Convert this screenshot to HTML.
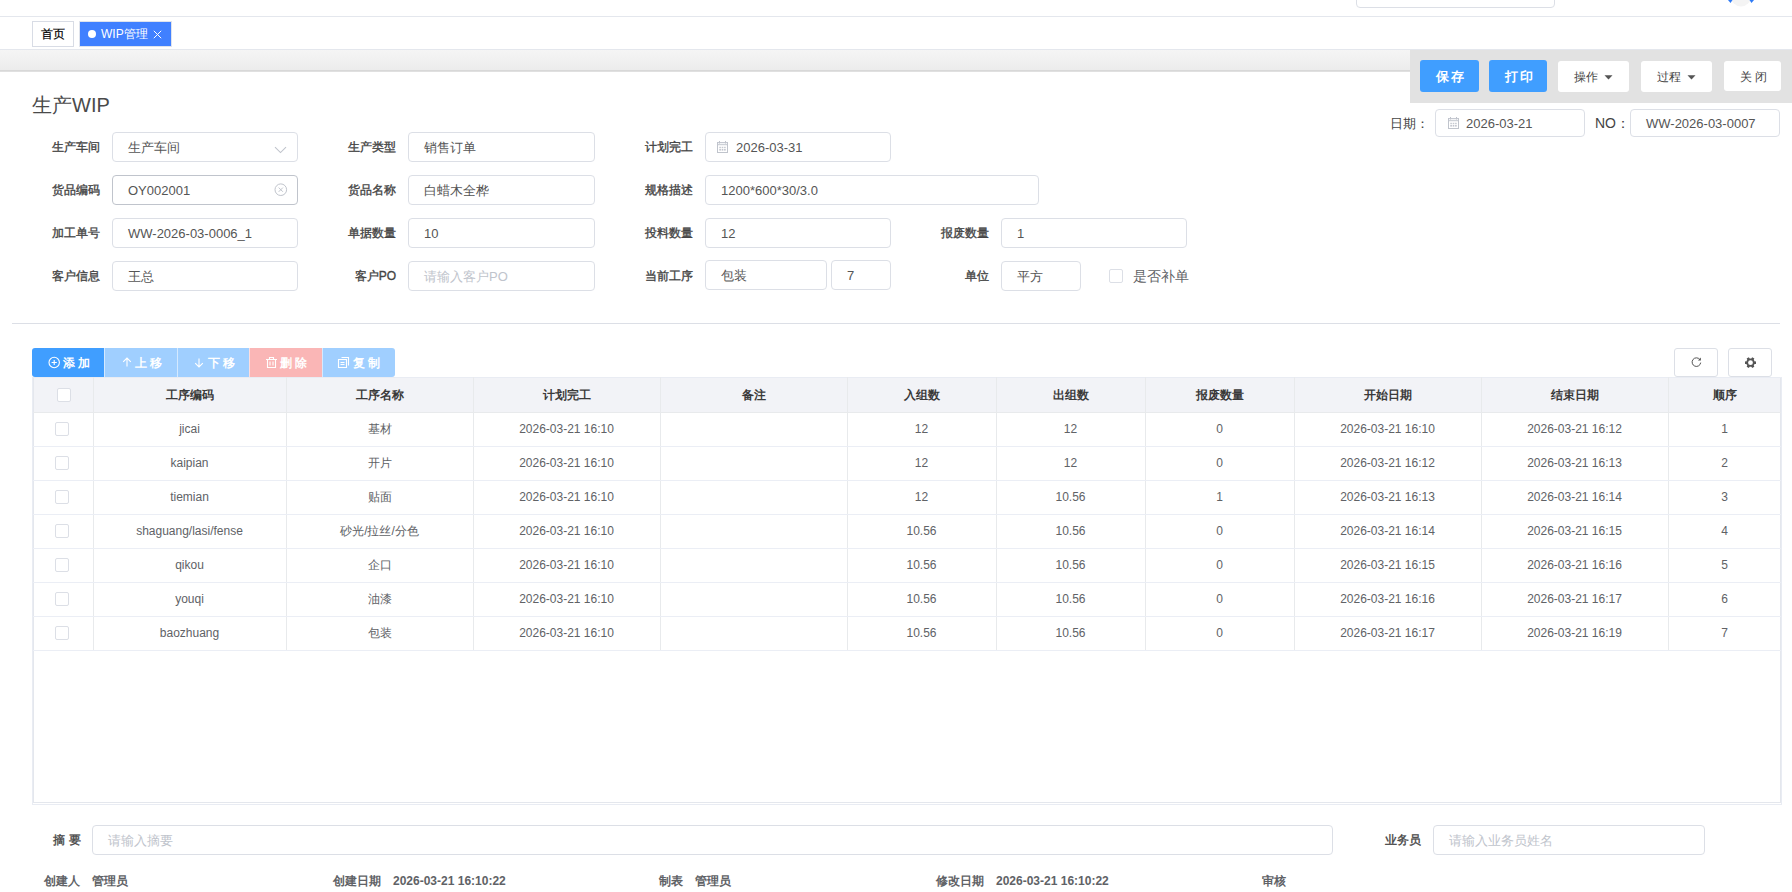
<!DOCTYPE html>
<html><head><meta charset="utf-8">
<style>
*{box-sizing:border-box;margin:0;padding:0}
html,body{width:1792px;height:892px;overflow:hidden;background:#fff;font-family:"Liberation Sans",sans-serif;color:#606266}
.a{position:absolute}
.hl{position:absolute;height:1px;background:#e4e7ed}
.lbl{position:absolute;font-size:12px;font-weight:normal;color:#444;-webkit-text-stroke:0.35px #444;text-align:right;white-space:nowrap;line-height:30px;height:30px}
.inp{position:absolute;height:30px;border:1px solid #dcdfe6;border-radius:4px;background:#fff;font-size:13px;color:#555;line-height:29px;padding-left:15px;white-space:nowrap}
.ph{color:#c0c4cc}
.bt{position:absolute;font-size:13px;font-weight:bold;white-space:nowrap;line-height:16px}
.tt{position:absolute;top:355px;height:16px;color:#fff;font-size:12px;font-weight:bold;line-height:16px;letter-spacing:2.5px;white-space:nowrap}
.cb{position:absolute;width:14px;height:14px;border:1px solid #dcdfe6;border-radius:2px;background:#fff}
.th{position:absolute;top:377px;height:35px;line-height:36px;font-size:12px;font-weight:bold;color:#3a3a3a;text-align:center;white-space:nowrap}
.td{position:absolute;height:34px;line-height:34px;font-size:12px;color:#606266;text-align:center;white-space:nowrap}
.vl{position:absolute;width:1px;background:#e8eaec}
.ft{position:absolute;top:873px;font-size:12px;font-weight:bold;color:#606266;line-height:16px;white-space:nowrap}
</style></head><body>

<!-- header -->
<div class="a" style="left:1356px;top:-23px;width:199px;height:31px;border:1px solid #dcdfe6;border-radius:4px"></div>
<svg class="a" style="left:1726px;top:0" width="30" height="10" viewBox="0 0 30 10"><circle cx="15" cy="-3.5" r="10" fill="#f4f4f4"/><path d="M2 0H6.5L4.5 3Z" fill="#2f7bf5"/><path d="M23.5 0H28L25.5 3Z" fill="#2f7bf5"/></svg>

<div class="hl" style="left:0;top:16px;width:1792px"></div>

<!-- tabs -->
<div class="a" style="left:32px;top:21px;width:42px;height:26px;border:1px solid #d8dce5;background:#fff;font-size:12px;color:#000;line-height:24px;text-align:center;-webkit-text-stroke:0.2px #000">首页</div>
<div class="a" style="left:79px;top:21px;width:93px;height:26px;border:1px solid #dfe3ec;background:#4080ff"></div>
<div class="a" style="left:80px;top:22px;width:91px;height:24px;background:#4080ff;font-size:12px;color:#fff;line-height:24px;white-space:nowrap">
  <span class="a" style="left:8px;top:8px;width:8px;height:8px;border-radius:50%;background:#fff"></span>
  <span class="a" style="left:21px;top:0">WIP管理</span>
  <svg class="a" style="left:73px;top:8px" width="9" height="9" viewBox="0 0 9 9"><path d="M0.8 0.8L8.2 8.2M8.2 0.8L0.8 8.2" stroke="#fff" stroke-width="1"/></svg>
</div>
<div class="hl" style="left:0;top:49px;width:1792px"></div>
<div class="a" style="left:0;top:50px;width:1792px;height:20px;background:linear-gradient(#f5f5f5,#ececec)"></div>
<div class="a" style="left:0;top:70px;width:1792px;height:2px;background:linear-gradient(#d4d4d4,#e4e4e4)"></div>

<!-- toolbar -->
<div class="a" style="left:1410px;top:50px;width:382px;height:53px;background:#e2e2e2"></div>
<div class="a" style="left:1420px;top:60px;width:59px;height:32px;background:#409eff;border-radius:3px"></div>
<div class="bt" style="left:1436px;top:69px;color:#fff;letter-spacing:2px">保存</div>
<div class="a" style="left:1489px;top:60px;width:58px;height:32px;background:#409eff;border-radius:3px"></div>
<div class="bt" style="left:1505px;top:69px;color:#fff;letter-spacing:2px">打印</div>
<div class="a" style="left:1558px;top:61px;width:71px;height:31px;background:#fff;border-radius:3px"></div>
<div class="bt" style="left:1574px;top:69px;color:#444;font-size:12px;font-weight:normal">操作</div>
<svg class="a" style="left:1604px;top:75px" width="9" height="5" viewBox="0 0 9 5"><path d="M0.5 0.2H8.5L4.5 4.6Z" fill="#555"/></svg>
<div class="a" style="left:1641px;top:61px;width:71px;height:31px;background:#fff;border-radius:3px"></div>
<div class="bt" style="left:1657px;top:69px;color:#444;font-size:12px;font-weight:normal">过程</div>
<svg class="a" style="left:1687px;top:75px" width="9" height="5" viewBox="0 0 9 5"><path d="M0.5 0.2H8.5L4.5 4.6Z" fill="#555"/></svg>
<div class="a" style="left:1724px;top:61px;width:57px;height:30px;background:#fff;border-radius:3px"></div>
<div class="bt" style="left:1740px;top:69px;color:#444;font-size:12px;font-weight:normal;letter-spacing:3px">关闭</div>

<!-- title -->
<div class="a" style="left:32px;top:91px;font-size:20px;color:#4a4a4a;line-height:28px;white-space:nowrap">生产WIP</div>

<!-- date / no -->
<div class="a" style="left:1390px;top:109px;font-size:13px;color:#444;line-height:29px">日期：</div>
<div class="inp" style="left:1435px;top:109px;width:150px;height:28px;line-height:27px;padding-left:30px">2026-03-21</div>
<svg class="a" style="left:1447px;top:117px" width="12" height="12" viewBox="0 0 12 12"><g fill="none" stroke="#c0c4cc" stroke-width="1"><rect x="1.5" y="1.5" width="10" height="10"/></g><rect x="1" y="1" width="11" height="3.2" fill="#c0c4cc" opacity=".85"/><rect x="2" y="1.9" width="9" height="1.2" fill="#fff" opacity=".8"/><rect x="3" y="0" width="1" height="2.5" fill="#c0c4cc"/><rect x="9" y="0" width="1" height="2.5" fill="#c0c4cc"/><g fill="#c0c4cc"><rect x="3.3" y="5.8" width="1.6" height="1.1"/><rect x="5.7" y="5.8" width="1.6" height="1.1"/><rect x="8.1" y="5.8" width="1.6" height="1.1"/><rect x="3.3" y="7.8" width="1.6" height="1.8"/><rect x="5.7" y="7.8" width="1.6" height="1.8"/><rect x="8.1" y="7.8" width="1.6" height="1.8"/></g></svg>
<div class="a" style="left:1595px;top:109px;font-size:14px;color:#444;line-height:29px">NO：</div>
<div class="inp" style="left:1630px;top:109px;width:150px;height:28px;line-height:27px;padding-left:15px">WW-2026-03-0007</div>

<!-- form row 1 -->
<div class="lbl" style="left:40px;top:132px;width:60px">生产车间</div>
<div class="inp" style="left:112px;top:132px;width:186px">生产车间</div>
<svg class="a" style="left:274px;top:146px" width="13" height="8" viewBox="0 0 13 8"><path d="M1 1.2L6.5 6.6L12 1.2" fill="none" stroke="#c0c4cc" stroke-width="1.1"/></svg>
<div class="lbl" style="left:336px;top:132px;width:60px">生产类型</div>
<div class="inp" style="left:408px;top:132px;width:187px">销售订单</div>
<div class="lbl" style="left:633px;top:132px;width:60px">计划完工</div>
<div class="inp" style="left:705px;top:132px;width:186px;padding-left:30px">2026-03-31</div>
<svg class="a" style="left:716px;top:141px" width="12" height="12" viewBox="0 0 12 12"><g fill="none" stroke="#c0c4cc" stroke-width="1"><rect x="1.5" y="1.5" width="10" height="10"/></g><rect x="1" y="1" width="11" height="3.2" fill="#c0c4cc" opacity=".85"/><rect x="2" y="1.9" width="9" height="1.2" fill="#fff" opacity=".8"/><rect x="3" y="0" width="1" height="2.5" fill="#c0c4cc"/><rect x="9" y="0" width="1" height="2.5" fill="#c0c4cc"/><g fill="#c0c4cc"><rect x="3.3" y="5.8" width="1.6" height="1.1"/><rect x="5.7" y="5.8" width="1.6" height="1.1"/><rect x="8.1" y="5.8" width="1.6" height="1.1"/><rect x="3.3" y="7.8" width="1.6" height="1.8"/><rect x="5.7" y="7.8" width="1.6" height="1.8"/><rect x="8.1" y="7.8" width="1.6" height="1.8"/></g></svg>

<!-- row 2 -->
<div class="lbl" style="left:40px;top:175px;width:60px">货品编码</div>
<div class="inp" style="left:112px;top:175px;width:186px;border-color:#c0c4cc">OY002001</div>
<svg class="a" style="left:274px;top:183px" width="14" height="14" viewBox="0 0 14 14"><circle cx="6.8" cy="6.7" r="5.8" fill="none" stroke="#c0c4cc" stroke-width="1"/><path d="M4.7 4.6L8.9 8.8M8.9 4.6L4.7 8.8" stroke="#c0c4cc" stroke-width="1"/></svg>
<div class="lbl" style="left:336px;top:175px;width:60px">货品名称</div>
<div class="inp" style="left:408px;top:175px;width:187px">白蜡木全桦</div>
<div class="lbl" style="left:633px;top:175px;width:60px">规格描述</div>
<div class="inp" style="left:705px;top:175px;width:334px">1200*600*30/3.0</div>

<!-- row 3 -->
<div class="lbl" style="left:40px;top:218px;width:60px">加工单号</div>
<div class="inp" style="left:112px;top:218px;width:186px">WW-2026-03-0006_1</div>
<div class="lbl" style="left:336px;top:218px;width:60px">单据数量</div>
<div class="inp" style="left:408px;top:218px;width:187px">10</div>
<div class="lbl" style="left:633px;top:218px;width:60px">投料数量</div>
<div class="inp" style="left:705px;top:218px;width:186px">12</div>
<div class="lbl" style="left:929px;top:218px;width:60px">报废数量</div>
<div class="inp" style="left:1001px;top:218px;width:186px">1</div>

<!-- row 4 -->
<div class="lbl" style="left:40px;top:261px;width:60px">客户信息</div>
<div class="inp" style="left:112px;top:261px;width:186px">王总</div>
<div class="lbl" style="left:336px;top:261px;width:60px">客户PO</div>
<div class="inp ph" style="left:408px;top:261px;width:187px">请输入客户PO</div>
<div class="lbl" style="left:633px;top:261px;width:60px">当前工序</div>
<div class="inp" style="left:705px;top:260px;width:122px">包装</div>
<div class="inp" style="left:831px;top:260px;width:60px">7</div>
<div class="lbl" style="left:929px;top:261px;width:60px">单位</div>
<div class="inp" style="left:1001px;top:261px;width:80px">平方</div>
<div class="cb" style="left:1109px;top:269px"></div>
<div class="a" style="left:1133px;top:261px;font-size:14px;color:#606266;line-height:30px;white-space:nowrap">是否补单</div>

<div class="a" style="left:12px;top:323px;width:1768px;height:1px;background:#dcdfe6"></div>

<!-- table toolbar -->
<div class="a" style="left:32px;top:348px;width:72px;height:29px;background:#409eff;border-radius:3px 0 0 3px"></div>
<div class="a" style="left:104px;top:348px;width:73px;height:29px;background:#a0cfff"></div>
<div class="a" style="left:177px;top:348px;width:72px;height:29px;background:#a0cfff"></div>
<div class="a" style="left:249px;top:348px;width:73px;height:29px;background:#fab6b6"></div>
<div class="a" style="left:322px;top:348px;width:73px;height:29px;background:#a0cfff;border-radius:0 3px 3px 0"></div>
<div class="a" style="left:104px;top:348px;width:1px;height:29px;background:rgba(255,255,255,.55)"></div>
<div class="a" style="left:177px;top:348px;width:1px;height:29px;background:rgba(255,255,255,.55)"></div>
<div class="a" style="left:249px;top:348px;width:1px;height:29px;background:rgba(255,255,255,.55)"></div>
<div class="a" style="left:322px;top:348px;width:1px;height:29px;background:rgba(255,255,255,.55)"></div>
<svg class="a" style="left:48px;top:356px" width="13" height="13" viewBox="0 0 13 13"><circle cx="6.2" cy="6.5" r="5.2" fill="none" stroke="#fff" stroke-width="1.1"/><path d="M3.6 6.5H8.8M6.2 3.9V9.1" stroke="#fff" stroke-width="1.1"/></svg>
<div class="tt" style="left:63px">添加</div>
<svg class="a" style="left:122px;top:357px" width="10" height="10" viewBox="0 0 10 10"><path d="M5 9.5V1M1.2 4.8L5 1L8.8 4.8" fill="none" stroke="#fff" stroke-width="1.1"/></svg>
<div class="tt" style="left:135px">上移</div>
<svg class="a" style="left:194px;top:358px" width="10" height="10" viewBox="0 0 10 10"><path d="M5 0.5V9M1.2 5.2L5 9L8.8 5.2" fill="none" stroke="#fff" stroke-width="1.1"/></svg>
<div class="tt" style="left:208px">下移</div>
<svg class="a" style="left:265px;top:356px" width="13" height="13" viewBox="0 0 13 13"><path d="M1 3.5H12M4.5 3.5V1.5H8.5V3.5M2.5 3.5V11.5H10.5V3.5M5 5.5V9.5M8 5.5V9.5" fill="none" stroke="#fff" stroke-width="1.1"/></svg>
<div class="tt" style="left:280px">删除</div>
<svg class="a" style="left:337px;top:356px" width="14" height="13" viewBox="0 0 14 13"><path d="M4.5 1.5H11.5V9.5M1.5 3.5H9.5V11.5H1.5Z M3.5 6.5H7.5M3.5 8.5H7.5" fill="none" stroke="#fff" stroke-width="1.1"/></svg>
<div class="tt" style="left:353px">复制</div>

<div class="a" style="left:1674px;top:348px;width:44px;height:29px;border:1px solid #dcdfe6;border-radius:3px;background:#fff"></div>
<svg class="a" style="left:1690px;top:356px" width="13" height="13" viewBox="0 0 13 13"><path d="M9.9 3.6A4.3 4.3 0 1 0 10.7 6.6" fill="none" stroke="#555" stroke-width="1"/><path d="M7.9 4.4L10.9 4.4L10.9 1.6Z" fill="#555"/></svg>
<div class="a" style="left:1728px;top:348px;width:44px;height:29px;border:1px solid #dcdfe6;border-radius:3px;background:#fff"></div>
<svg class="a" style="left:1744px;top:356px" width="13" height="13" viewBox="0 0 13 13"><g fill="#555"><circle cx="6.5" cy="6.7" r="4.1"/><rect x="5.2" y="1.2" width="2.6" height="2.6" transform="rotate(30 6.5 6.7)"/><rect x="5.2" y="1.2" width="2.6" height="2.6" transform="rotate(90 6.5 6.7)"/><rect x="5.2" y="1.2" width="2.6" height="2.6" transform="rotate(150 6.5 6.7)"/><rect x="5.2" y="1.2" width="2.6" height="2.6" transform="rotate(210 6.5 6.7)"/><rect x="5.2" y="1.2" width="2.6" height="2.6" transform="rotate(270 6.5 6.7)"/><rect x="5.2" y="1.2" width="2.6" height="2.6" transform="rotate(330 6.5 6.7)"/></g><circle cx="6.5" cy="6.7" r="2.4" fill="#fff"/></svg>

<!-- table -->
<div class="a" style="left:32px;top:377px;width:1750px;height:428px;border:1px solid #e9ecf3"></div>
<div class="a" style="left:33px;top:378px;width:1748px;height:425px;border:1px solid #e4e7ed;border-top:none"></div>
<div class="a" style="left:34px;top:378px;width:1746px;height:34px;background:#f2f3f7"></div>
<div id="tbl">
<div class="cb" style="left:57px;top:388px"></div>
<div class="th" style="left:93px;width:193px">工序编码</div>
<div class="th" style="left:286px;width:187px">工序名称</div>
<div class="th" style="left:473px;width:187px">计划完工</div>
<div class="th" style="left:660px;width:187px">备注</div>
<div class="th" style="left:847px;width:149px">入组数</div>
<div class="th" style="left:996px;width:149px">出组数</div>
<div class="th" style="left:1145px;width:149px">报废数量</div>
<div class="th" style="left:1294px;width:187px">开始日期</div>
<div class="th" style="left:1481px;width:187px">结束日期</div>
<div class="th" style="left:1668px;width:113px">顺序</div>
<div class="vl" style="left:93px;top:377px;height:273px"></div>
<div class="vl" style="left:286px;top:377px;height:273px"></div>
<div class="vl" style="left:473px;top:377px;height:273px"></div>
<div class="vl" style="left:660px;top:377px;height:273px"></div>
<div class="vl" style="left:847px;top:377px;height:273px"></div>
<div class="vl" style="left:996px;top:377px;height:273px"></div>
<div class="vl" style="left:1145px;top:377px;height:273px"></div>
<div class="vl" style="left:1294px;top:377px;height:273px"></div>
<div class="vl" style="left:1481px;top:377px;height:273px"></div>
<div class="vl" style="left:1668px;top:377px;height:273px"></div>
<div class="a" style="left:33px;top:412px;width:1748px;height:1px;background:#e8eaec"></div>
<div class="cb" style="left:55px;top:422px"></div>
<div class="td" style="left:93px;top:412px;width:193px">jicai</div>
<div class="td" style="left:286px;top:412px;width:187px">基材</div>
<div class="td" style="left:473px;top:412px;width:187px">2026-03-21 16:10</div>
<div class="td" style="left:847px;top:412px;width:149px">12</div>
<div class="td" style="left:996px;top:412px;width:149px">12</div>
<div class="td" style="left:1145px;top:412px;width:149px">0</div>
<div class="td" style="left:1294px;top:412px;width:187px">2026-03-21 16:10</div>
<div class="td" style="left:1481px;top:412px;width:187px">2026-03-21 16:12</div>
<div class="td" style="left:1668px;top:412px;width:113px">1</div>
<div class="a" style="left:33px;top:446px;width:1748px;height:1px;background:#ebeef5"></div>
<div class="cb" style="left:55px;top:456px"></div>
<div class="td" style="left:93px;top:446px;width:193px">kaipian</div>
<div class="td" style="left:286px;top:446px;width:187px">开片</div>
<div class="td" style="left:473px;top:446px;width:187px">2026-03-21 16:10</div>
<div class="td" style="left:847px;top:446px;width:149px">12</div>
<div class="td" style="left:996px;top:446px;width:149px">12</div>
<div class="td" style="left:1145px;top:446px;width:149px">0</div>
<div class="td" style="left:1294px;top:446px;width:187px">2026-03-21 16:12</div>
<div class="td" style="left:1481px;top:446px;width:187px">2026-03-21 16:13</div>
<div class="td" style="left:1668px;top:446px;width:113px">2</div>
<div class="a" style="left:33px;top:480px;width:1748px;height:1px;background:#ebeef5"></div>
<div class="cb" style="left:55px;top:490px"></div>
<div class="td" style="left:93px;top:480px;width:193px">tiemian</div>
<div class="td" style="left:286px;top:480px;width:187px">贴面</div>
<div class="td" style="left:473px;top:480px;width:187px">2026-03-21 16:10</div>
<div class="td" style="left:847px;top:480px;width:149px">12</div>
<div class="td" style="left:996px;top:480px;width:149px">10.56</div>
<div class="td" style="left:1145px;top:480px;width:149px">1</div>
<div class="td" style="left:1294px;top:480px;width:187px">2026-03-21 16:13</div>
<div class="td" style="left:1481px;top:480px;width:187px">2026-03-21 16:14</div>
<div class="td" style="left:1668px;top:480px;width:113px">3</div>
<div class="a" style="left:33px;top:514px;width:1748px;height:1px;background:#ebeef5"></div>
<div class="cb" style="left:55px;top:524px"></div>
<div class="td" style="left:93px;top:514px;width:193px">shaguang/lasi/fense</div>
<div class="td" style="left:286px;top:514px;width:187px">砂光/拉丝/分色</div>
<div class="td" style="left:473px;top:514px;width:187px">2026-03-21 16:10</div>
<div class="td" style="left:847px;top:514px;width:149px">10.56</div>
<div class="td" style="left:996px;top:514px;width:149px">10.56</div>
<div class="td" style="left:1145px;top:514px;width:149px">0</div>
<div class="td" style="left:1294px;top:514px;width:187px">2026-03-21 16:14</div>
<div class="td" style="left:1481px;top:514px;width:187px">2026-03-21 16:15</div>
<div class="td" style="left:1668px;top:514px;width:113px">4</div>
<div class="a" style="left:33px;top:548px;width:1748px;height:1px;background:#ebeef5"></div>
<div class="cb" style="left:55px;top:558px"></div>
<div class="td" style="left:93px;top:548px;width:193px">qikou</div>
<div class="td" style="left:286px;top:548px;width:187px">企口</div>
<div class="td" style="left:473px;top:548px;width:187px">2026-03-21 16:10</div>
<div class="td" style="left:847px;top:548px;width:149px">10.56</div>
<div class="td" style="left:996px;top:548px;width:149px">10.56</div>
<div class="td" style="left:1145px;top:548px;width:149px">0</div>
<div class="td" style="left:1294px;top:548px;width:187px">2026-03-21 16:15</div>
<div class="td" style="left:1481px;top:548px;width:187px">2026-03-21 16:16</div>
<div class="td" style="left:1668px;top:548px;width:113px">5</div>
<div class="a" style="left:33px;top:582px;width:1748px;height:1px;background:#ebeef5"></div>
<div class="cb" style="left:55px;top:592px"></div>
<div class="td" style="left:93px;top:582px;width:193px">youqi</div>
<div class="td" style="left:286px;top:582px;width:187px">油漆</div>
<div class="td" style="left:473px;top:582px;width:187px">2026-03-21 16:10</div>
<div class="td" style="left:847px;top:582px;width:149px">10.56</div>
<div class="td" style="left:996px;top:582px;width:149px">10.56</div>
<div class="td" style="left:1145px;top:582px;width:149px">0</div>
<div class="td" style="left:1294px;top:582px;width:187px">2026-03-21 16:16</div>
<div class="td" style="left:1481px;top:582px;width:187px">2026-03-21 16:17</div>
<div class="td" style="left:1668px;top:582px;width:113px">6</div>
<div class="a" style="left:33px;top:616px;width:1748px;height:1px;background:#ebeef5"></div>
<div class="cb" style="left:55px;top:626px"></div>
<div class="td" style="left:93px;top:616px;width:193px">baozhuang</div>
<div class="td" style="left:286px;top:616px;width:187px">包装</div>
<div class="td" style="left:473px;top:616px;width:187px">2026-03-21 16:10</div>
<div class="td" style="left:847px;top:616px;width:149px">10.56</div>
<div class="td" style="left:996px;top:616px;width:149px">10.56</div>
<div class="td" style="left:1145px;top:616px;width:149px">0</div>
<div class="td" style="left:1294px;top:616px;width:187px">2026-03-21 16:17</div>
<div class="td" style="left:1481px;top:616px;width:187px">2026-03-21 16:19</div>
<div class="td" style="left:1668px;top:616px;width:113px">7</div>
<div class="a" style="left:33px;top:650px;width:1748px;height:1px;background:#ebeef5"></div>
</div><!--/tbl-->

<!-- summary -->
<div class="lbl" style="left:53px;top:825px;text-align:left;letter-spacing:4px">摘要</div>
<div class="inp ph" style="left:92px;top:825px;width:1241px">请输入摘要</div>
<div class="lbl" style="left:1361px;top:825px;width:60px">业务员</div>
<div class="inp ph" style="left:1433px;top:825px;width:272px">请输入业务员姓名</div>

<!-- footer -->
<div class="ft" style="left:44px">创建人</div>
<div class="ft" style="left:92px">管理员</div>
<div class="ft" style="left:333px">创建日期</div>
<div class="ft" style="left:393px">2026-03-21 16:10:22</div>
<div class="ft" style="left:659px">制表</div>
<div class="ft" style="left:695px">管理员</div>
<div class="ft" style="left:936px">修改日期</div>
<div class="ft" style="left:996px">2026-03-21 16:10:22</div>
<div class="ft" style="left:1262px">审核</div>

</body></html>
